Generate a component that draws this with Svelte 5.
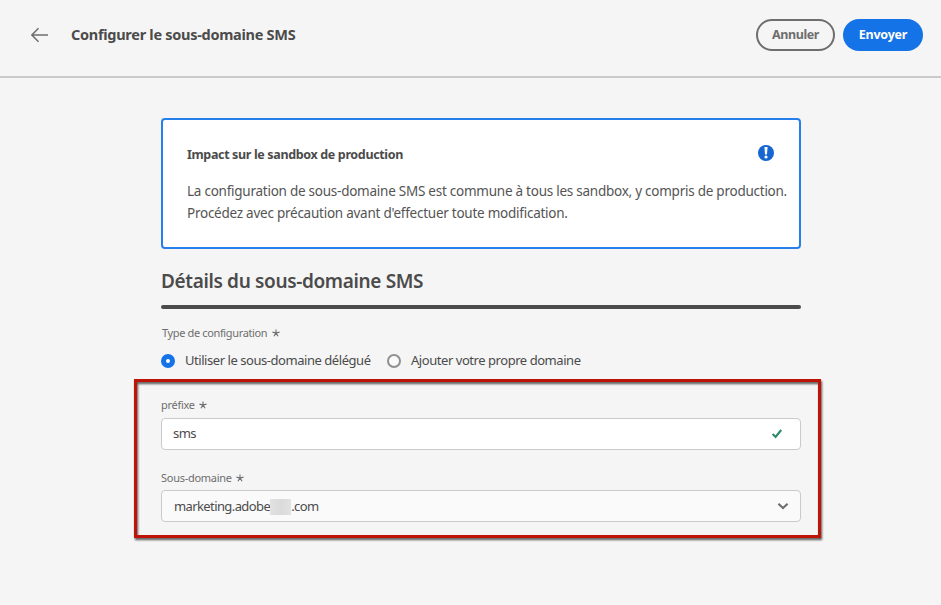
<script>
  let type = $state('delegated');
  let prefix = $state('sms');
</script>

{#snippet star()}
  <svg class="star" viewBox="0 0 8 8" width="8" height="8" aria-hidden="true">
    <path d="M4 4.1V.4M4 4.1L.5 3.1M4 4.1l3.5-1M4 4.1L1.9 7.2M4 4.1L6.1 7.2" />
  </svg>
{/snippet}

<div class="page">
  <header>
    <svg class="back" viewBox="0 0 18 16" width="18" height="16">
      <path d="M17 8H1M7.5 1.2L.9 8 7.5 14.8" />
    </svg>
    <h1>Configurer le sous-domaine SMS</h1>
    <button class="cancel">Annuler</button>
    <button class="send">Envoyer</button>
  </header>

  <main>
    <section class="notice">
      <div class="notice-head">
        <strong>Impact sur le sandbox de production</strong>
        <svg viewBox="0 0 16 16" width="16" height="16">
          <circle cx="8" cy="8" r="8" fill="#1565d2" />
          <path d="M6.4 2h3.2L9 9.6H7z" fill="#fff" />
          <circle cx="8" cy="12" r="1.6" fill="#fff" />
        </svg>
      </div>
      <p>La configuration de sous-domaine SMS est commune à tous les sandbox, y compris de production.<br />Procédez avec précaution avant d'effectuer toute modification.</p>
    </section>

    <h2>Détails du sous-domaine SMS</h2>
    <hr />

    <div class="label type">Type de configuration {@render star()}</div>
    <div class="radios">
      <button class="radio first" onclick={() => (type = 'delegated')}>
        <span class="dot" class:on={type === 'delegated'}></span>Utiliser le sous-domaine délégué
      </button>
      <button class="radio second" onclick={() => (type = 'own')}>
        <span class="dot" class:on={type === 'own'}></span>Ajouter votre propre domaine
      </button>
    </div>

    <section class="frame">
      <div class="label short">préfixe {@render star()}</div>
      <div class="field text">
        <input bind:value={prefix} aria-label="préfixe" />
        <svg class="check" viewBox="0 0 12 10" width="12" height="10">
          <path d="M1.6 5l3 3L10.2 1" />
        </svg>
      </div>
      <div class="label short sub">Sous-domaine {@render star()}</div>
      <div class="field select">
        <span class="value">marketing.adobe</span><span class="mask"></span><span class="value">.com</span>
        <svg class="chevron" viewBox="0 0 12 8" width="12" height="8">
          <path d="M1.4 1.7L6 6l4.6-4.3" />
        </svg>
      </div>
    </section>
  </main>
</div>

<style>
  :global(body) { background: #f5f5f5; }
  .page {
    width: 100%;
    height: 605px;
    overflow: hidden;
    background: #f5f5f5;
    color: #4b4b4b;
    font-family: 'Noto Sans', 'Open Sans', sans-serif;
    font-size: 13px;
  }
  button, input { font: inherit; color: inherit; margin: 0; padding: 0; border: 0; background: none; }
  header {
    display: flex;
    align-items: center;
    box-sizing: border-box;
    height: 78px;
    padding: 0 18px 6px 31px;
    border-bottom: 2px solid #cacaca;
  }
  .back { flex: none; margin-right: 22px; fill: none; stroke: #6e6e6e; stroke-width: 1.5; }
  h1 { flex: 1; margin: 0; padding-bottom: 2px; font-size: 14.5px; line-height: 22px; font-weight: 700; letter-spacing: -0.28px; white-space: nowrap; }
  header button {
    box-sizing: border-box;
    height: 32px;
    border-radius: 16px;
    font-size: 12.5px;
    font-weight: 700;
    line-height: 18px;
    letter-spacing: -0.38px;
  }
  .cancel { width: 79px; margin-right: 8px; border: 2px solid #6e6e6e; color: #6e6e6e; }
  .send { width: 80px; background: #1473e6; color: #fff; letter-spacing: -0.22px; }

  main { width: 640px; margin: 40px 0 0 161px; }
  .notice {
    box-sizing: border-box;
    height: 131px;
    padding: 24px 0 0 24px;
    border: 2px solid #2680eb;
    border-radius: 4px;
    background: #fff;
  }
  .notice-head { display: flex; justify-content: space-between; height: 20px; line-height: 20px; padding-right: 25px; }
  .notice-head svg { margin-top: 1px; }
  strong { padding-top: 1px; font-size: 12.5px; font-weight: 700; letter-spacing: -0.35px; }
  p { margin: 16px 0 0; font-size: 13.5px; line-height: 22px; letter-spacing: -0.25px; white-space: nowrap; color: #545454; }
  h2 { margin: 19px 0 0; font-size: 19px; line-height: 26px; font-weight: 600; letter-spacing: -0.35px; }
  hr { height: 4px; margin: 11px 0 16px; border: 0; border-radius: 2px; background: #4b4b4b; }

  .label { display: flex; align-items: center; gap: 5px; height: 16px; line-height: 16px; font-size: 11px; letter-spacing: -0.36px; color: #6e6e6e; }
  .type { margin-left: 1px; }
  .short { gap: 4px; letter-spacing: -0.28px; }
  .star { fill: none; stroke: #6e6e6e; stroke-width: 1.1; }
  .radios { display: flex; gap: 16px; margin-top: 9px; }
  .radio { display: flex; height: 20px; line-height: 20px; letter-spacing: -0.45px; white-space: nowrap; }
  .first { width: 210px; }
  .dot { box-sizing: border-box; flex: none; width: 14px; height: 14px; margin: 4px 10px 0 0; border: 2px solid #909090; border-radius: 50%; background: #fafafa; }
  .dot.on { border: 5px solid #1473e6; background: #fff; }

  .frame { position: relative; box-sizing: border-box; width: 687px; height: 159px; margin: 9px 0 0 -27px; padding: 18px 20px 0 27px; }
  .frame::after {
    content: '';
    position: absolute;
    inset: 0;
    border: 3px solid #be1407;
    filter: drop-shadow(1px 2px 1px rgba(0, 0, 0, 0.65));
    pointer-events: none;
  }
  .field { display: flex; align-items: center; box-sizing: border-box; height: 32px; border: 1px solid #cacaca; border-radius: 4px; letter-spacing: -0.6px; }
  .text { margin-top: 5px; padding: 0 17px 0 11px; background: #fff; }
  input { flex: 1; min-width: 0; height: 20px; padding-bottom: 2px; outline: none; letter-spacing: -0.6px; }
  .check { fill: none; stroke: #2d8a68; stroke-width: 2.1; }
  .sub { margin-top: 20px; }
  .select { margin-top: 4px; padding: 0 11px 0 12px; background: #fafafa; }
  .value { line-height: 20px; }
  .mask { width: 21px; height: 16px; margin-top: 2px; background: linear-gradient(90deg, #e2e2e2, #dadada 50%, #e2e2e2); }
  .chevron { margin-left: auto; fill: none; stroke: #6e6e6e; stroke-width: 2.1; }
</style>
